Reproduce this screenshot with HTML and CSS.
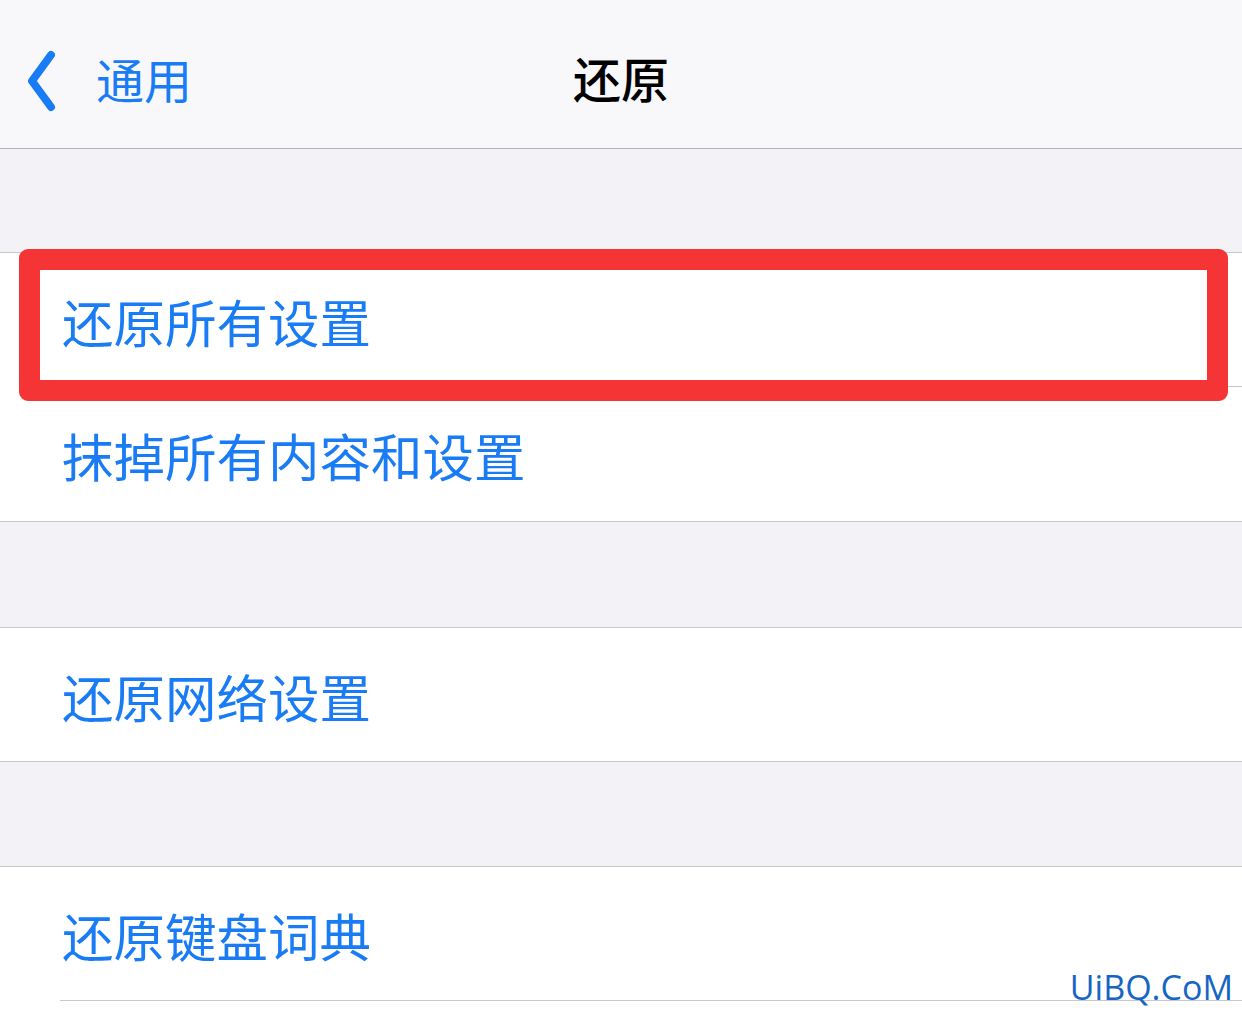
FILE: index.html
```html
<!DOCTYPE html>
<html lang="zh-CN">

<head>
    <meta charset="UTF-8">
    <meta name="viewport" content="width=device-width, initial-scale=1.0">
    <title>还原</title>
    <link rel="stylesheet" href="styles.css">
</head>

<body>
    <div class="nav">
        <a class="back">
            <svg class="chevron" width="34" height="62" viewBox="0 0 34 62">
                <path d="M27 5 L8 31 L27 57" fill="none" stroke="#1a7cf5" stroke-width="8" stroke-linecap="round" stroke-linejoin="round" />
            </svg>
            <span>通用</span>
        </a>
        <h1>还原</h1>
    </div>

    <div class="gap"></div>
    <div class="group">
        <div class="row highlight">
            <span>还原所有设置</span>
            <div class="mark"></div>
        </div>
        <div class="sep"></div>
        <div class="row tall"><span>抹掉所有内容和设置</span></div>
    </div>

    <div class="gap wide"></div>
    <div class="group">
        <div class="row"><span>还原网络设置</span></div>
    </div>

    <div class="gap mid"></div>
    <div class="group open">
        <div class="row"><span>还原键盘词典</span></div>
        <div class="sep"></div>
        <div class="watermark">UiBQ.CoM</div>
    </div>
</body>

</html>
```

FILE: styles.css
```css
body {
    margin: 0;
    padding: 0;
    background-color: #fff;
    font-family: "Noto Sans CJK SC", "Noto Sans", sans-serif;
    width: 1242px;
    height: 1014px;
    overflow: hidden;
}

.nav {
    height: 148px;
    background-color: #f8f8fa;
    border-bottom: 1px solid #b5b5b8;
    position: relative;
    display: flex;
    align-items: center;
    justify-content: center;
}

.nav h1 {
    margin: 0;
    font-size: 48px;
    font-weight: 500;
    color: #000;
    line-height: 1;
    padding-top: 6px;
}

.back {
    position: absolute;
    left: 24px;
    top: 0;
    height: 148px;
    display: flex;
    align-items: center;
    gap: 38px;
    color: #1a7cf5;
    font-size: 48px;
    line-height: 1;
}

.back span {
    padding-top: 8px;
}

.chevron {
    margin-top: 14px;
}

.gap {
    height: 103px;
    background-color: #f2f2f7;
}

.gap.wide {
    height: 105px;
}

.gap.mid {
    height: 104px;
}

.group {
    background-color: #fff;
    border-top: 1px solid #c8c7cc;
    border-bottom: 1px solid #c8c7cc;
}

.group.open {
    border-bottom: none;
}

.row {
    height: 133px;
    display: flex;
    align-items: center;
    padding-left: 62px;
    color: #1a7cf5;
    font-size: 51.5px;
    line-height: 1;
    position: relative;
}

.row.tall {
    height: 134px;
}

.row span {
    padding-top: 2px;
}

.sep {
    height: 1px;
    margin-left: 60px;
    background-color: #c8c7cc;
}

.mark {
    position: absolute;
    left: 19px;
    top: -4px;
    width: 1167px;
    height: 110px;
    border: 21px solid #f53535;
    border-radius: 9px;
}

.watermark {
    position: absolute;
    right: 9px;
    top: 970px;
    font-family: "Open Sans", sans-serif;
    font-size: 34px;
    color: #1565c4;
    line-height: 1;
}
```
